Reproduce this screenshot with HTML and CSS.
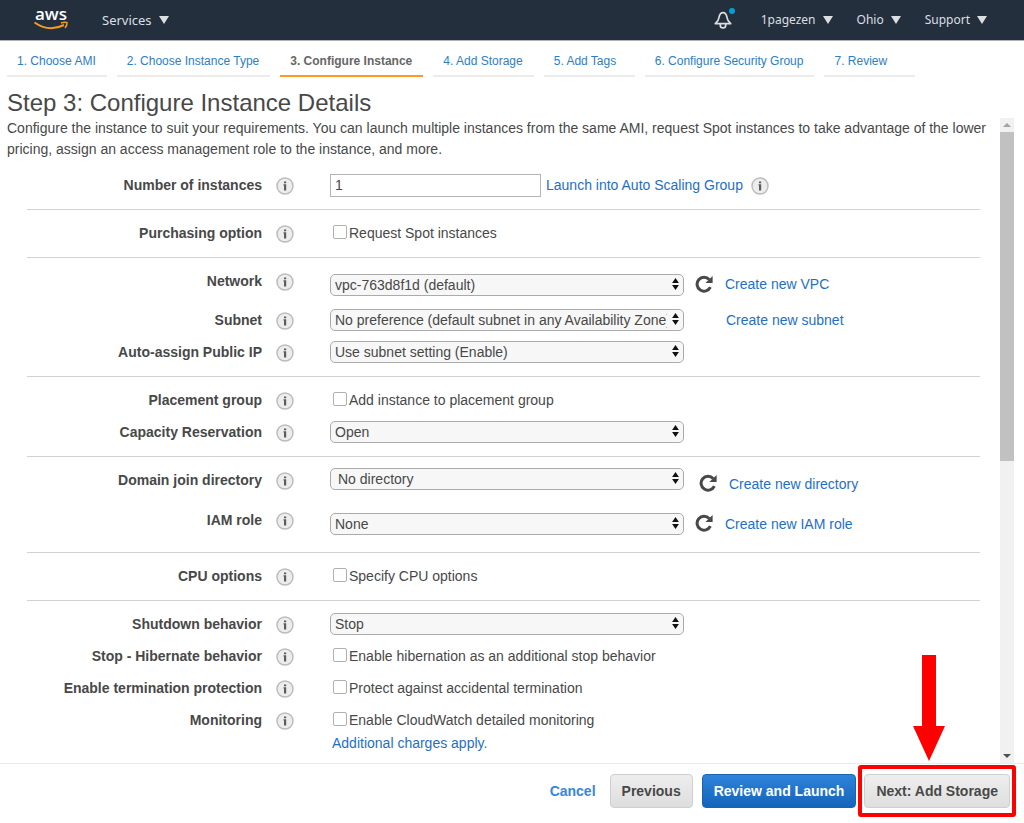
FILE: index.html
```html
<!DOCTYPE html>
<html lang="en">
<head>
<meta charset="utf-8">
<meta name="viewport" content="width=device-width, initial-scale=1">
<title>Configure Instance Details</title>
<link rel="stylesheet" href="styles.css">
</head>
<body>
<svg class="defs" aria-hidden="true">
  <symbol id="info" viewBox="0 0 18 18">
    <circle cx="9" cy="9" r="8" fill="#ededed" stroke="#bcbcbc" stroke-width="1.5"/>
    <path d="M8 4.4h2.2v1.9H8zM7.5 7.3h2.7v6.2H8V8.6h-.5z" fill="#5c5c5c"/>
  </symbol>
  <symbol id="refresh" viewBox="0 0 18 18">
    <path d="M14.2 4.4A7 7 0 1 0 15.4 12.2" fill="none" stroke="#484848" stroke-width="3"/>
    <path d="M17.6 1V8H10.4z" fill="#484848"/>
  </symbol>
  <symbol id="sort" viewBox="0 0 8 12">
    <path d="M4 0L7.4 5H.6zM4 12L.6 7h6.8z" fill="#111"/>
  </symbol>
  <symbol id="caret" viewBox="0 0 10 8">
    <path d="M0 0h10L5 8z" fill="#dcdfe2"/>
  </symbol>
</svg>

<header class="topbar">
  <a class="logo" href="#" aria-label="aws">
    <svg width="36" height="28" viewBox="0 0 36 28">
      <text class="logo-text" x="17" y="14" text-anchor="middle">aws</text>
      <path d="M.5 16.5Q15 26.5 30 19" fill="none" stroke="#f79a1e" stroke-width="2"/>
      <path d="M27 17Q31.5 15.6 33 16.7Q33.2 19.5 31 22" fill="none" stroke="#f79a1e" stroke-width="1.5"/>
    </svg>
  </a>
  <button class="nav nav-services">Services <svg class="caret"><use href="#caret"/></svg></button>
  <div class="nav-right">
    <button class="bell" aria-label="Notifications">
      <svg width="18" height="18" viewBox="0 0 18 18" fill="none" stroke="#dcdfe2" stroke-width="1.7">
        <path d="M1.3 12.7H16.7Q13.4 10 13 6.5Q12.2 1.6 9 1.6T5 6.5Q4.6 10 1.3 12.7z" stroke-linejoin="round"/>
        <path d="M6.3 13v1.2a2.7 2.7 0 0 0 5.4 0V13"/>
      </svg>
      <span class="dot"></span>
    </button>
    <button class="nav">1pagezen <svg class="caret"><use href="#caret"/></svg></button>
    <button class="nav">Ohio <svg class="caret"><use href="#caret"/></svg></button>
    <button class="nav">Support <svg class="caret"><use href="#caret"/></svg></button>
  </div>
</header>

<nav class="steps">
  <a class="step" href="#">1. Choose AMI</a>
  <a class="step" href="#">2. Choose Instance Type</a>
  <a class="step active" href="#" aria-current="step">3. Configure Instance</a>
  <a class="step" href="#">4. Add Storage</a>
  <a class="step" href="#">5. Add Tags</a>
  <a class="step" href="#">6. Configure Security Group</a>
  <a class="step" href="#">7. Review</a>
</nav>

<h1 class="title">Step 3: Configure Instance Details</h1>

<div class="scroll">
  <main class="content">
    <p class="intro">Configure the instance to suit your requirements. You can launch multiple instances from the same AMI, request Spot instances to take advantage of the lower pricing, assign an access management role to the instance, and more.</p>
    <form class="form">
      <section class="group">
        <div class="row">
          <label class="name" for="count">Number of instances</label>
          <svg class="info"><use href="#info"/></svg>
          <div class="field">
            <input class="text" id="count" type="text" value="1">
            <a class="after-input" href="#">Launch into Auto Scaling Group</a>
            <svg class="info-inline"><use href="#info"/></svg>
          </div>
        </div>
      </section>
      <section class="group">
        <div class="row">
          <span class="name">Purchasing option</span>
          <svg class="info"><use href="#info"/></svg>
          <label class="check"><input type="checkbox">Request Spot instances</label>
        </div>
      </section>
      <section class="group">
        <div class="row medium">
          <label class="name" for="network">Network</label>
          <svg class="info"><use href="#info"/></svg>
          <div class="field">
            <span class="select"><select id="network"><option>vpc-763d8f1d (default)</option></select><svg><use href="#sort"/></svg></span>
            <button type="button" class="refresh" aria-label="Refresh networks"><svg><use href="#refresh"/></svg></button>
            <a href="#">Create new VPC</a>
          </div>
        </div>
        <div class="row">
          <label class="name" for="subnet">Subnet</label>
          <svg class="info"><use href="#info"/></svg>
          <div class="field">
            <span class="select"><select id="subnet"><option>No preference (default subnet in any Availability Zone)</option></select><svg><use href="#sort"/></svg></span>
            <a class="no-refresh" href="#">Create new subnet</a>
          </div>
        </div>
        <div class="row">
          <label class="name" for="publicip">Auto-assign Public IP</label>
          <svg class="info"><use href="#info"/></svg>
          <div class="field">
            <span class="select"><select id="publicip"><option>Use subnet setting (Enable)</option></select><svg><use href="#sort"/></svg></span>
          </div>
        </div>
      </section>
      <section class="group">
        <div class="row">
          <span class="name">Placement group</span>
          <svg class="info"><use href="#info"/></svg>
          <label class="check"><input type="checkbox">Add instance to placement group</label>
        </div>
        <div class="row">
          <label class="name" for="capacity">Capacity Reservation</label>
          <svg class="info"><use href="#info"/></svg>
          <div class="field">
            <span class="select"><select id="capacity"><option>Open</option></select><svg><use href="#sort"/></svg></span>
          </div>
        </div>
      </section>
      <section class="group">
        <div class="row tall">
          <label class="name" for="directory">Domain join directory</label>
          <svg class="info"><use href="#info"/></svg>
          <div class="field directory">
            <span class="select"><select id="directory"><option>No directory</option></select><svg><use href="#sort"/></svg></span>
            <button type="button" class="refresh" aria-label="Refresh directories"><svg><use href="#refresh"/></svg></button>
            <a href="#">Create new directory</a>
          </div>
        </div>
        <div class="row tall">
          <label class="name" for="role">IAM role</label>
          <svg class="info"><use href="#info"/></svg>
          <div class="field">
            <span class="select"><select id="role"><option>None</option></select><svg><use href="#sort"/></svg></span>
            <button type="button" class="refresh" aria-label="Refresh roles"><svg><use href="#refresh"/></svg></button>
            <a href="#">Create new IAM role</a>
          </div>
        </div>
      </section>
      <section class="group">
        <div class="row">
          <span class="name">CPU options</span>
          <svg class="info"><use href="#info"/></svg>
          <label class="check"><input type="checkbox">Specify CPU options</label>
        </div>
      </section>
      <section class="group">
        <div class="row">
          <label class="name" for="shutdown">Shutdown behavior</label>
          <svg class="info"><use href="#info"/></svg>
          <div class="field">
            <span class="select"><select id="shutdown"><option>Stop</option></select><svg><use href="#sort"/></svg></span>
          </div>
        </div>
        <div class="row">
          <span class="name">Stop - Hibernate behavior</span>
          <svg class="info"><use href="#info"/></svg>
          <label class="check"><input type="checkbox">Enable hibernation as an additional stop behavior</label>
        </div>
        <div class="row">
          <span class="name">Enable termination protection</span>
          <svg class="info"><use href="#info"/></svg>
          <label class="check"><input type="checkbox">Protect against accidental termination</label>
        </div>
        <div class="row">
          <span class="name">Monitoring</span>
          <svg class="info"><use href="#info"/></svg>
          <div class="stack">
            <label class="check"><input type="checkbox">Enable CloudWatch detailed monitoring</label>
            <a class="charges" href="#">Additional charges apply.</a>
          </div>
        </div>
      </section>
    </form>
  </main>
  <div class="scrollbar" aria-hidden="true">
    <svg class="up" viewBox="0 0 14 14"><path d="M3 9h8L7 5z" fill="#a3a3a3"/></svg>
    <span class="thumb"></span>
    <svg class="down" viewBox="0 0 14 14"><path d="M3 5h8L7 9z" fill="#505050"/></svg>
  </div>
</div>

<footer class="footer">
  <a class="cancel" href="#">Cancel</a>
  <button class="btn">Previous</button>
  <button class="btn primary">Review and Launch</button>
  <div class="next">
    <button class="btn">Next: Add Storage</button>
    <span class="highlight"></span>
    <svg class="arrow" viewBox="0 0 32 106"><path d="M9 0h14v71h9L16 106 0 71h9z" fill="#f00"/></svg>
  </div>
</footer>
</body>
</html>
```
FILE: styles.css
```css
* { box-sizing: border-box; }

body {
  margin: 0;
  height: 100vh;
  display: flex;
  flex-direction: column;
  overflow: hidden;
  background: #fff;
  color: #484848;
  font: 14px/21px "Liberation Sans", Arial, sans-serif;
}

a { color: #1f6fc4; text-decoration: none; }
button { font: inherit; color: inherit; border: 0; background: none; padding: 0; }
.defs { display: none; }

/* Top bar */
.topbar {
  flex: none;
  display: flex;
  align-items: center;
  height: 40px;
  padding: 0 37px 0 34px;
  background: #242f3e;
  box-shadow: 0 1px 0 #b0b4ba;
}
.logo { display: flex; }
.logo svg { overflow: visible; }
.logo-text { font: 600 17px "Open Sans", sans-serif; fill: #fff; }
.nav {
  display: flex;
  align-items: center;
  gap: 7px;
  color: #dcdfe2;
  font: 12px/20px "Noto Sans", sans-serif;
}
.nav-services { margin-left: 32px; font-size: 13px; }
.caret { width: 10px; height: 8px; }
.nav-right { margin-left: auto; display: flex; align-items: center; gap: 24px; }
.bell { position: relative; display: flex; margin-right: 5px; }
.dot {
  position: absolute;
  top: -3px;
  right: -3px;
  width: 6px;
  height: 6px;
  border-radius: 50%;
  background: #00a1d6;
}

/* Wizard steps */
.steps { flex: none; display: flex; gap: 10px; padding: 10px 7px 0; }
.step {
  min-width: 91px;
  height: 27px;
  padding: 0 11px 0 10px;
  border-bottom: 2px solid #ececec;
  color: #2d7ec2;
  font-size: 12px;
  line-height: 22px;
  white-space: nowrap;
}
.step.active { border-color: #ff9a1f; color: #666; font-weight: bold; }

.title {
  flex: none;
  margin: 12px 7px 1px;
  font-size: 24px;
  line-height: 28px;
  font-weight: normal;
}

/* Scrolling area */
.scroll { flex: 1; min-height: 0; display: flex; padding: 0 10px 0 7px; }
.content { flex: 1; min-width: 0; overflow: hidden; }
.intro { margin: 0 0 2px; }
.form { margin: 0 20px; }
.group { padding: 7px 0 8px; border-bottom: 1px solid #d2d2d2; }
.group:last-child { border-bottom: 0; }
.row { display: grid; grid-template-columns: 235px 68px 1fr; min-height: 32px; }
.row.medium { min-height: 39px; }
.row.tall { min-height: 40px; }
.name { text-align: right; font-weight: bold; line-height: 32px; }
.info { width: 18px; height: 18px; margin: 8px 0 0 14px; }
.field { display: flex; align-items: center; }
.text {
  width: 211px;
  height: 23px;
  padding: 0 4px;
  border: 1px solid #b4b4b4;
  color: #484848;
  font: inherit;
}
.after-input { margin-left: 5px; }
.info-inline { width: 18px; height: 18px; margin: 2px 0 0 8px; }
.select { position: relative; width: 354px; height: 22px; }
.select select {
  appearance: none;
  display: block;
  width: 100%;
  height: 100%;
  padding: 0 16px 0 4px;
  border: 1px solid #ababab;
  border-radius: 5px;
  background: #f7f7f7;
  color: #484848;
  font: inherit;
  line-height: 20px;
}
.select svg { position: absolute; top: 4px; right: 4px; width: 9px; height: 12px; }
.refresh { margin: 0 12px 2px 11px; }
.refresh svg { display: block; width: 18px; height: 18px; }
.no-refresh { margin-left: 42px; }
.directory .select { align-self: flex-start; margin-top: 4px; }
.directory .select select { padding-left: 7px; }
.directory .refresh { margin-left: 15px; }
.check { display: flex; align-items: center; height: 32px; padding: 0 0 0 3px; }
.check input {
  appearance: none;
  width: 14px;
  height: 14px;
  margin: 0 2px 3px 0;
  border: 1px solid #b0b0b0;
  border-radius: 2px;
  background: #fff;
}
.stack { display: flex; flex-direction: column; align-items: flex-start; }
.charges { margin: -3px 0 0 2px; }

.scrollbar { flex: none; width: 14px; display: flex; flex-direction: column; background: #f1f1f1; }
.up, .down { flex: none; height: 14px; }
.thumb { height: 51%; background: #c1c1c1; }
.down { margin-top: auto; }

/* Footer */
.footer {
  flex: none;
  display: flex;
  align-items: center;
  justify-content: flex-end;
  padding: 10px 14px 15px 7px;
  border-top: 1px solid #eaeaea;
  font-weight: bold;
}
.cancel { margin-right: 14px; color: #3787da; }
.btn {
  height: 34px;
  padding: 0 11px;
  border: 1px solid #cfcfcf;
  border-radius: 4px;
  background: linear-gradient(#eee, #dedede);
}
.primary {
  margin: 0 8px 0 9px;
  border-color: #1763b4;
  background: linear-gradient(#3083da, #1364bb);
  color: #fff;
}
.next { position: relative; }
.highlight {
  position: absolute;
  inset: -9px -6px -9px -6px;
  border: 4px solid #f00;
  border-radius: 3px;
  pointer-events: none;
}
.arrow { position: absolute; bottom: 47px; right: 65px; width: 32px; height: 106px; }
```
